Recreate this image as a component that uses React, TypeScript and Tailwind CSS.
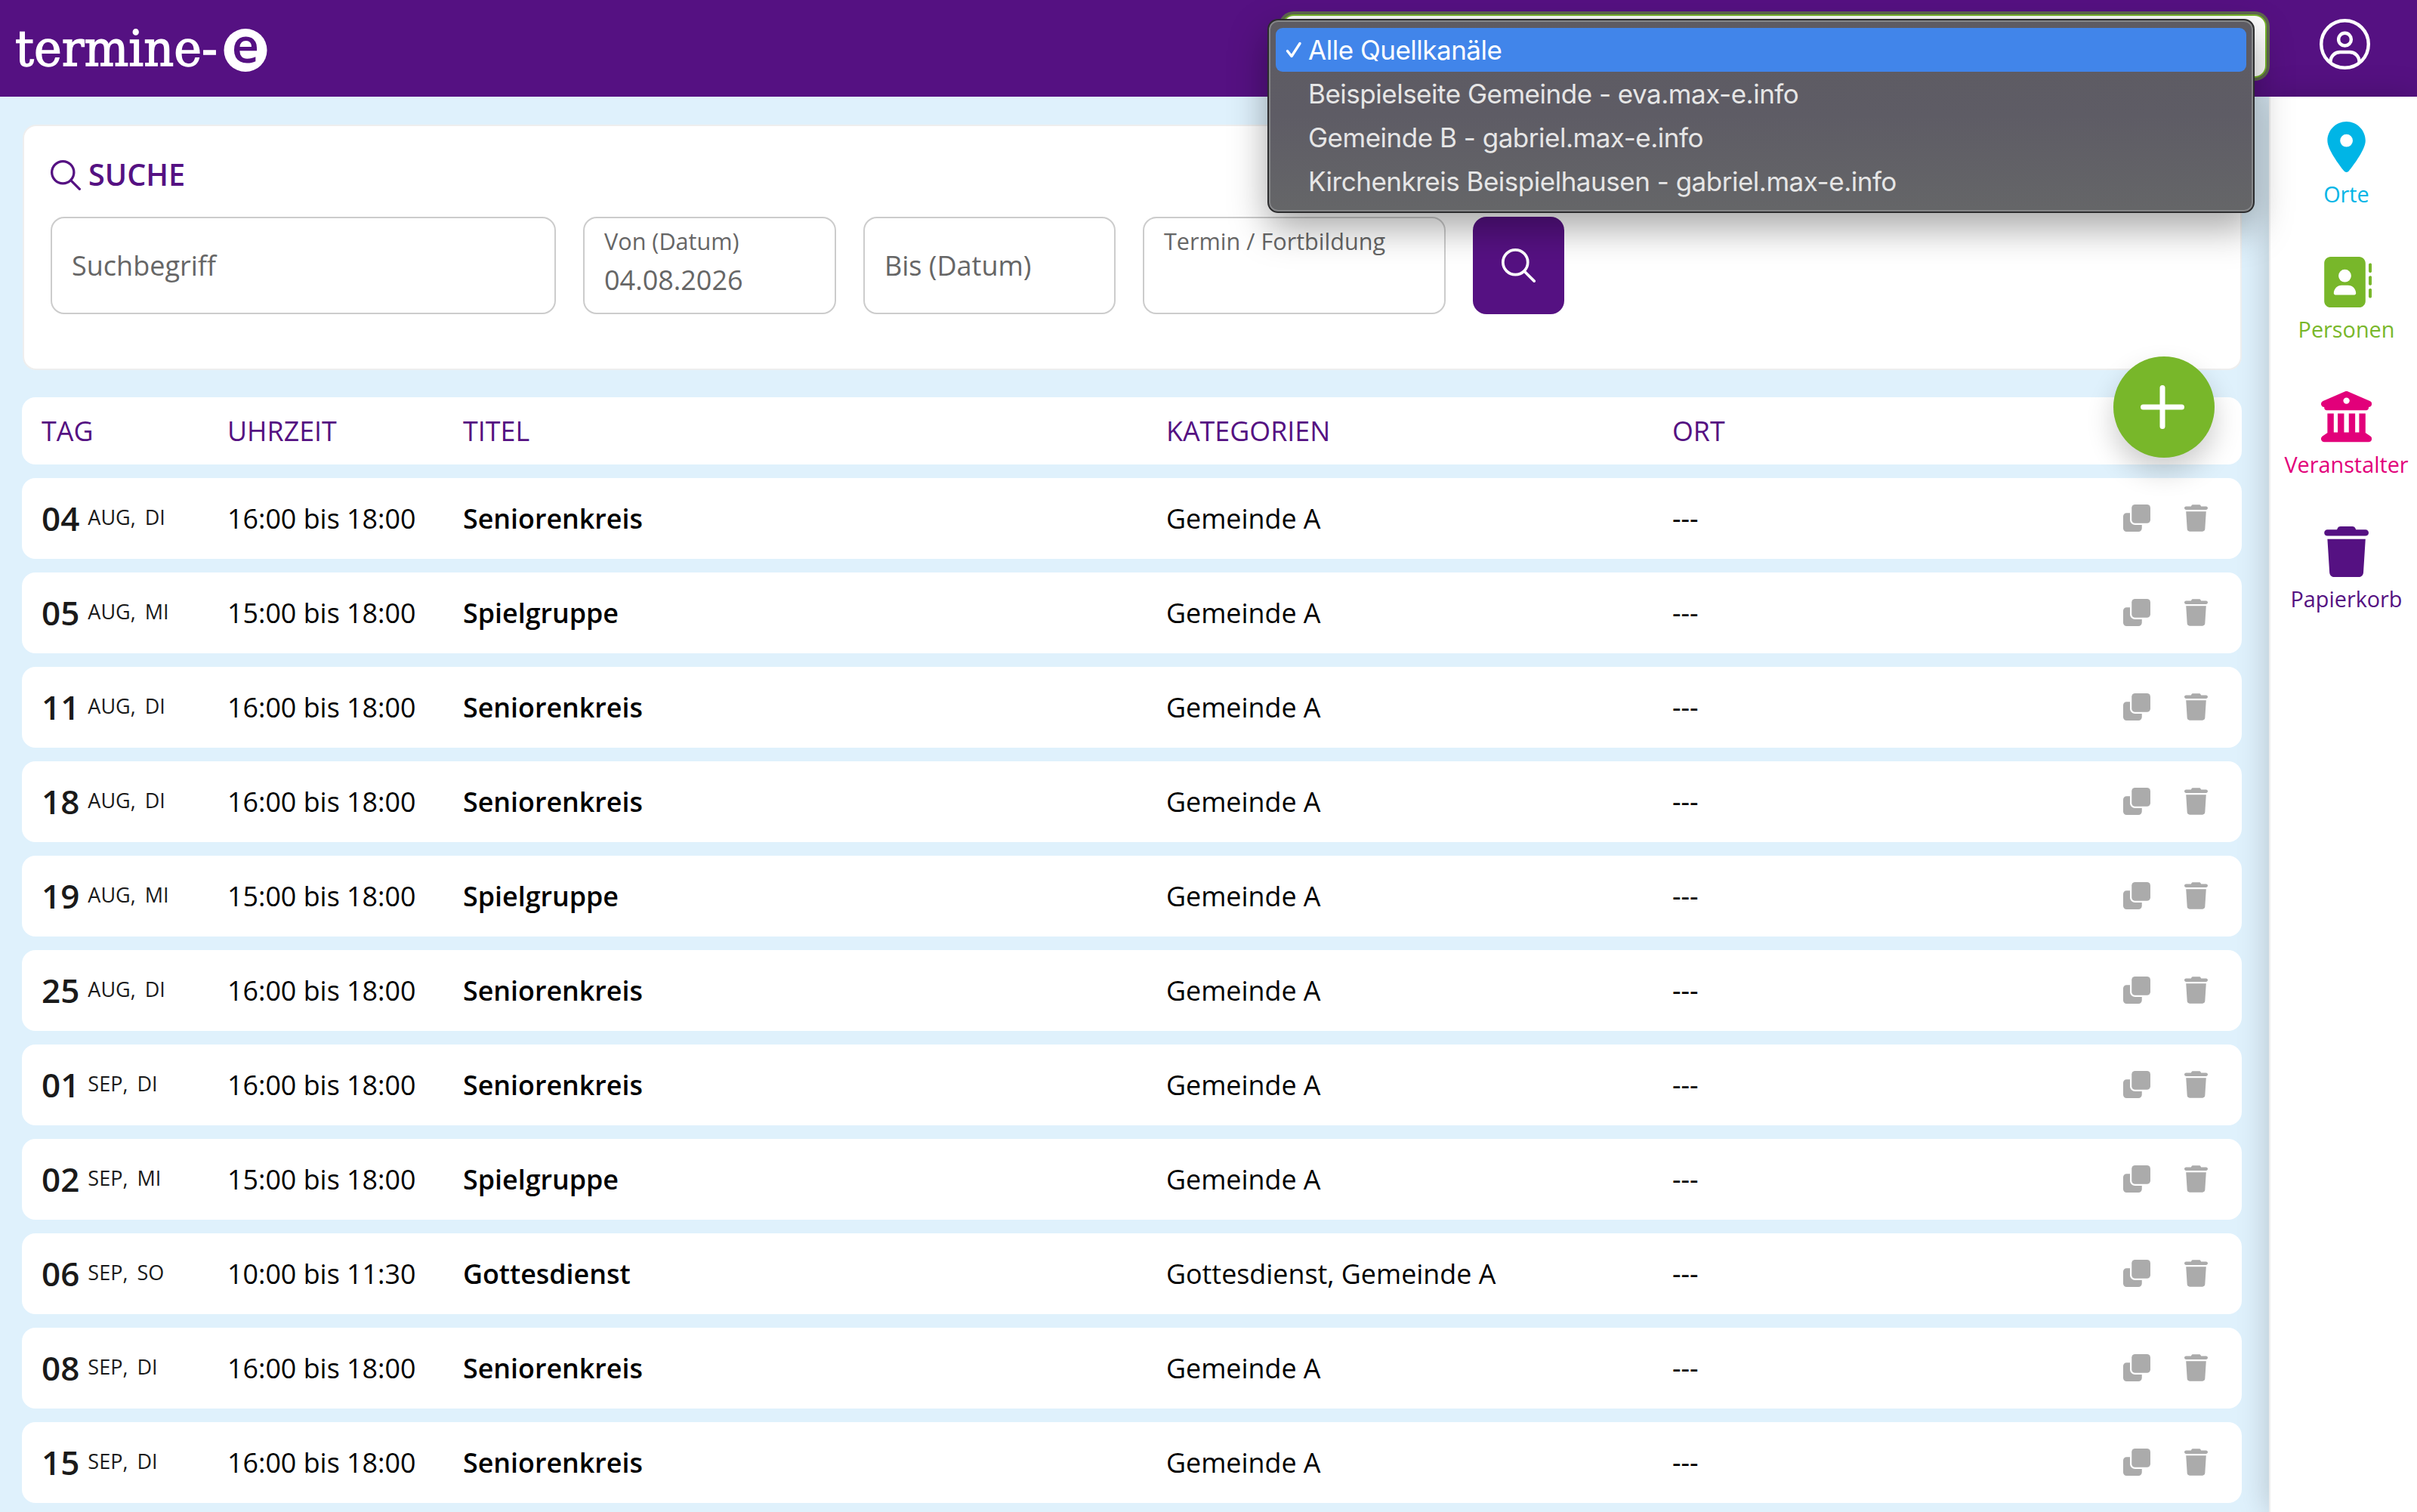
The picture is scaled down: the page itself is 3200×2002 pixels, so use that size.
import { useState } from 'react';
import { FaAddressBook, FaBuildingColumns, FaLocationDot, FaTrash } from 'react-icons/fa6';
import clsx from 'clsx';

interface Termin {
  day: string;
  month: string;
  weekday: string;
  time: string;
  title: string;
  categories: string;
}

const termine: Termin[] = [
  { day: '04', month: 'AUG', weekday: 'DI', time: '16:00 bis 18:00', title: 'Seniorenkreis', categories: 'Gemeinde A' },
  { day: '05', month: 'AUG', weekday: 'MI', time: '15:00 bis 18:00', title: 'Spielgruppe', categories: 'Gemeinde A' },
  { day: '11', month: 'AUG', weekday: 'DI', time: '16:00 bis 18:00', title: 'Seniorenkreis', categories: 'Gemeinde A' },
  { day: '18', month: 'AUG', weekday: 'DI', time: '16:00 bis 18:00', title: 'Seniorenkreis', categories: 'Gemeinde A' },
  { day: '19', month: 'AUG', weekday: 'MI', time: '15:00 bis 18:00', title: 'Spielgruppe', categories: 'Gemeinde A' },
  { day: '25', month: 'AUG', weekday: 'DI', time: '16:00 bis 18:00', title: 'Seniorenkreis', categories: 'Gemeinde A' },
  { day: '01', month: 'SEP', weekday: 'DI', time: '16:00 bis 18:00', title: 'Seniorenkreis', categories: 'Gemeinde A' },
  { day: '02', month: 'SEP', weekday: 'MI', time: '15:00 bis 18:00', title: 'Spielgruppe', categories: 'Gemeinde A' },
  { day: '06', month: 'SEP', weekday: 'SO', time: '10:00 bis 11:30', title: 'Gottesdienst', categories: 'Gottesdienst, Gemeinde A' },
  { day: '08', month: 'SEP', weekday: 'DI', time: '16:00 bis 18:00', title: 'Seniorenkreis', categories: 'Gemeinde A' },
  { day: '15', month: 'SEP', weekday: 'DI', time: '16:00 bis 18:00', title: 'Seniorenkreis', categories: 'Gemeinde A' },
];

const channels = [
  'Alle Quellkanäle',
  'Beispielseite Gemeinde - eva.max-e.info',
  'Gemeinde B - gabriel.max-e.info',
  'Kirchenkreis Beispielhausen - gabriel.max-e.info',
];

const navItems = [
  { label: 'Orte', icon: FaLocationDot, color: 'text-[#00b5e6]' },
  { label: 'Personen', icon: FaAddressBook, color: 'text-[#78b72a]' },
  { label: 'Veranstalter', icon: FaBuildingColumns, color: 'text-[#e2007a]' },
  { label: 'Papierkorb', icon: FaTrash, color: 'text-[#551182]' },
];

const rowGrid = 'grid grid-cols-[246px_312px_931px_670px_auto] items-center rounded-[18px] bg-white pl-[26px]';

const SearchIcon = ({ className }: { className: string }) => (
  <svg viewBox="0 0 512 512" fill="none" stroke="currentColor" strokeWidth="42" strokeLinecap="round" className={className}>
    <circle cx="208" cy="208" r="187" />
    <path d="M344 344L491 491" />
  </svg>
);

const UserIcon = () => (
  <svg viewBox="0 0 512 512" fill="none" stroke="white" strokeWidth="34" className="size-[67px]">
    <circle cx="256" cy="256" r="239" />
    <circle cx="256" cy="208" r="64" />
    <path d="M110 438C110 375 156 336 208 336h96c52 0 98 39 98 102" />
  </svg>
);

const CloneIcon = () => (
  <svg viewBox="0 0 512 512" fill="currentColor" className="size-9">
    <rect x="160" y="0" width="352" height="352" rx="64" />
    <path d="M64 160h64v128c0 53 43 96 96 96h128v64c0 35-29 64-64 64H64c-35 0-64-29-64-64V224c0-35 29-64 64-64z" />
  </svg>
);

const Logo = () => (
  <svg viewBox="0 0 360 128" className="h-32 w-[360px]">
    <text x="20" y="87" textLength="268" lengthAdjust="spacingAndGlyphs" fill="white" stroke="white" strokeWidth="1.4" fontSize="66" fontFamily="'DejaVu Serif', serif">
      termine-
    </text>
    <circle cx="325" cy="66.5" r="28.5" fill="white" />
    <text x="325" y="83" textAnchor="middle" fill="#551182" fontSize="63" fontWeight="600" fontFamily="'Open Sans', sans-serif">
      e
    </text>
  </svg>
);

const ChannelSelect = () => {
  const [selected, setSelected] = useState(0);

  return (
    <div className="relative h-[84px] w-[1304px] rounded-[16px] border-2 border-[#78b72a] bg-white ring-4 ring-[#5f6750]">
      <div className="absolute -left-[21px] top-[4px] z-20 h-[257px] w-[1307px] rounded-[14px] border-2 border-[#2c2c2e] bg-gradient-to-b from-[#5d5b62] via-[#5e5c65] to-[#656668] px-[9px] pt-[10px] font-['Inter',sans-serif] shadow-[0_20px_50px_rgba(0,0,0,0.35),inset_0_0_0_2px_#858688]">
        {channels.map((channel, i) => (
          <div
            key={channel}
            onClick={() => setSelected(i)}
            className={clsx(
              'flex h-[58px] items-center rounded-[9px] text-[35px] tracking-[-0.49px] whitespace-nowrap',
              i === selected ? 'bg-[#4185ea] text-white' : 'text-[#e6e6e6]'
            )}
          >
            <span className="flex w-[43px] justify-center pl-1">
              {i === selected && (
                <svg viewBox="0 0 22 22" fill="none" stroke="white" strokeWidth="3.4" strokeLinecap="round" strokeLinejoin="round" className="size-[22px]">
                  <path d="M2.5 12.5L8 19.5L19 2.5" />
                </svg>
              )}
            </span>
            {channel}
          </div>
        ))}
      </div>
    </div>
  );
};

const Header = () => (
  <header className="flex h-32 shrink-0 bg-[#551182]">
    <Logo />
    <div className="mt-[19px] ml-auto flex">
      <ChannelSelect />
      <button className="mt-[6px] ml-[70px] mr-[62px] size-[67px]">
        <UserIcon />
      </button>
    </div>
  </header>
);

interface FieldProps {
  label: string;
  value?: string;
  floating?: boolean;
  width: string;
}

const Field = ({ label, value, floating, width }: FieldProps) => (
  <div className={clsx('h-[129px] rounded-[18px] border-2 border-[#ccc] pl-[26px] text-[#666]', width)}>
    {floating ? (
      <>
        <div className="mt-[8px] text-[30.6px] leading-[44px]">{label}</div>
        <div className="text-[36px] leading-[59px]">{value}</div>
      </>
    ) : (
      <div className="text-[36px] leading-[126px]">{label}</div>
    )}
  </div>
);

const SearchPanel = () => (
  <section className="ml-px h-[325px] w-[2938px] rounded-[18px] border-2 border-[#eee] bg-white pt-[37px] pl-[35px]">
    <h2 className="flex h-[56px] items-center gap-[10px] text-[39.6px] font-semibold text-[#551182]">
      <SearchIcon className="size-[40px]" />
      SUCHE
    </h2>
    <div className="mt-[27px] flex gap-9">
      <Field label="Suchbegriff" width="w-[669px]" />
      <Field label="Von (Datum)" value="04.08.2026" floating width="w-[335px]" />
      <Field label="Bis (Datum)" width="w-[334px]" />
      <Field label="Termin / Fortbildung" floating width="w-[401px]" />
      <button className="flex h-[129px] w-[121px] items-center justify-center rounded-[18px] bg-[#551182] text-white">
        <SearchIcon className="size-[45px]" />
      </button>
    </div>
  </section>
);

const TermineList = () => (
  <div className="mt-9 flex w-[2939px] flex-col gap-[18px] text-[35.84px] text-black">
    <div className={clsx(rowGrid, 'h-[89px] text-[#551182]')}>
      <div>TAG</div>
      <div>UHRZEIT</div>
      <div>TITEL</div>
      <div>KATEGORIEN</div>
      <div>ORT</div>
    </div>
    {termine.map((termin) => (
      <div key={`${termin.day}-${termin.month}`} className={clsx(rowGrid, 'h-[107px]')}>
        <div className="flex items-center text-[#1a1a1a]">
          <span className="pb-0.5 text-[44px] font-semibold">{termin.day}</span>
          <span className="ml-[11px] pb-[3px] text-[27px] [word-spacing:5px]">{termin.month}, {termin.weekday}</span>
        </div>
        <div>{termin.time}</div>
        <div className="font-semibold">{termin.title}</div>
        <div>{termin.categories}</div>
        <div className="flex items-center">
          <span>---</span>
          <div className="mr-[45px] ml-auto flex gap-[45px] text-[#ababab]">
            <CloneIcon />
            <FaTrash className="h-9 w-[31px]" />
          </div>
        </div>
      </div>
    ))}
  </div>
);

const Sidebar = () => (
  <aside className="flex w-[196px] shrink-0 flex-col items-center border-l-2 border-[#eee] bg-white pt-[33px] pl-[7px] shadow-[0_0_40px_rgba(0,0,0,0.2)]">
    {navItems.map(({ label, icon: Icon, color }) => (
      <a key={label} className={clsx('flex h-[178.7px] flex-col items-center', color)}>
        <Icon className="size-[67.2px]" />
        <span className="mt-[9px] text-[28.8px] leading-[40px]">{label}</span>
      </a>
    ))}
  </aside>
);

const App = () => {
  return (
    <div className="flex h-[2002px] w-[3200px] flex-col overflow-hidden bg-[#dff1fc] font-['Open_Sans',sans-serif]">
      <Header />
      <div className="flex min-h-0 flex-1">
        <main className="relative min-w-0 flex-1 pt-[37px] pl-[29px]">
          <SearchPanel />
          <TermineList />
          <button className="absolute top-[344px] left-[2798px] flex size-[134px] items-center justify-center rounded-full bg-[#78b72a] shadow-[0_18px_36px_rgba(0,0,0,0.2)]">
            <svg viewBox="0 0 58 58" stroke="white" strokeWidth="7" strokeLinecap="round" className="mr-1 size-[58px]">
              <path d="M29 3.5v51M3.5 29h51" />
            </svg>
          </button>
        </main>
        <Sidebar />
      </div>
    </div>
  );
};

export default App;
